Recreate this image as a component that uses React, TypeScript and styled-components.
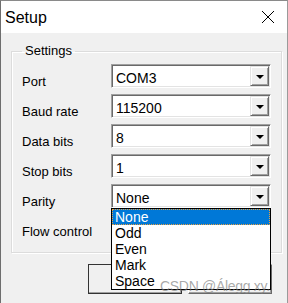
import React from "react";
import styled, { createGlobalStyle } from "styled-components";

const GlobalStyle = createGlobalStyle`
  html, body {
    margin: 0;
    padding: 0;
    background: #ffffff;
  }
  body {
    font-family: "Liberation Sans", Arial, sans-serif;
  }
`;

// the flow control value and the button captions sit under the open list
const rows = [
  { label: "Port", value: "COM3" },
  { label: "Baud rate", value: "115200" },
  { label: "Data bits", value: "8" },
  { label: "Stop bits", value: "1" },
  { label: "Parity", value: "None", open: true },
  { label: "Flow control", value: "" },
];

const parityOptions = ["None", "Odd", "Even", "Mark", "Space"];

const App = () => {
  return (
    <>
      <GlobalStyle />
      <Window>
        <TitleBar>
          <Title>Setup</Title>
          <CloseButton>
            <svg width="14" height="14" viewBox="0 0 14 14">
              <path d="M1 1 L13 13 M13 1 L1 13" stroke="#000" strokeWidth="1" fill="none" />
            </svg>
          </CloseButton>
        </TitleBar>
        <Body>
          <GroupBox>
            <Legend>Settings</Legend>
            <Grid>
              {rows.map(row => (
                <React.Fragment key={row.label}>
                  <Label>{row.label}</Label>
                  <ComboWrap>
                    <ComboBox>
                      <ComboValue>{row.value}</ComboValue>
                      <DropButton>
                        <Arrow />
                      </DropButton>
                    </ComboBox>
                    {row.open && (
                      <DropList>
                        {parityOptions.map(opt => (
                          <ListItem key={opt} selected={opt === row.value}>
                            {opt}
                          </ListItem>
                        ))}
                      </DropList>
                    )}
                  </ComboWrap>
                </React.Fragment>
              ))}
            </Grid>
          </GroupBox>
          <ButtonRow>
            <PushButton isDefault width={94} />
            <PushButton width={84} />
          </ButtonRow>
        </Body>
        <Watermark>CSDN @Álegg xy.</Watermark>
      </Window>
    </>
  );
};

export default App;

const Window = styled.div`
  position: relative;
  width: 288px;
  height: 303px;
  box-sizing: border-box;
  background-color: #f0f0f0;
  border-top: 1px solid #8a8a8a;
  border-left: 1px solid #6e6e6e;
  border-right: 1px solid #9a9a9a;
  overflow: hidden;
`;

const TitleBar = styled.div`
  height: 32px;
  background-color: #ffffff;
  display: flex;
  align-items: center;
  justify-content: space-between;
  padding: 0 12px 0 4px;
`;

const Title = styled.div`
  font-size: 16px;
  line-height: 16px;
  color: #000;
  padding-top: 1px;
`;

const CloseButton = styled.div`
  width: 14px;
  height: 14px;
  display: flex;
`;

const Body = styled.div`
  padding: 11px 0 0 10px;
`;

const GroupBox = styled.fieldset`
  box-sizing: border-box;
  width: 271px;
  margin: 0;
  padding: 6px 9px 14px 10px;
  border: 1px solid #dcdcdc;
  box-shadow: inset 1px 1px #ffffff, 1px 1px #ffffff;
  min-inline-size: 0;
`;

const Legend = styled.legend`
  font-size: 13px;
  line-height: 14px;
  padding: 0 3px;
  margin: 0;
  color: #000;
`;

const Grid = styled.div`
  display: grid;
  grid-template-columns: 89px 160px;
  grid-auto-rows: 24px;
  row-gap: 6px;
`;

const Label = styled.div`
  font-size: 13px;
  line-height: 13px;
  color: #000;
  display: flex;
  align-items: flex-end;
  white-space: nowrap;
`;

const ComboWrap = styled.div`
  position: relative;
`;

const ComboBox = styled.div`
  box-sizing: border-box;
  height: 24px;
  display: flex;
  padding: 1px;
  background-color: #ffffff;
  border: 1px solid;
  border-color: #a0a0a0 #ffffff #ffffff #a0a0a0;
  box-shadow: inset 1px 1px #696969, inset -1px -1px #e3e3e3;
`;

const ComboValue = styled.div`
  flex: 1;
  font-size: 14px;
  line-height: 20px;
  padding: 2px 0 0 3px;
  color: #000;
  overflow: hidden;
  white-space: nowrap;
`;

const DropButton = styled.div`
  box-sizing: border-box;
  width: 19px;
  height: 20px;
  background-color: #f0f0f0;
  border: 1px solid;
  border-color: #e3e3e3 #696969 #696969 #e3e3e3;
  box-shadow: inset 1px 1px #ffffff, inset -1px -1px #a0a0a0;
  display: flex;
  align-items: center;
  justify-content: center;
`;

const Arrow = styled.div`
  width: 0;
  height: 0;
  border-left: 4px solid transparent;
  border-right: 4px solid transparent;
  border-top: 4px solid #000;
  margin-top: 1px;
`;

const DropList = styled.div`
  position: absolute;
  top: 100%;
  left: 0;
  width: 160px;
  box-sizing: border-box;
  border: 1px solid #000;
  background-color: #ffffff;
  z-index: 2;
`;

const ListItem = styled.div<{ selected?: boolean }>`
  height: 16px;
  font-size: 14px;
  line-height: 16px;
  padding-left: 3px;
  color: ${props => (props.selected ? "#ffffff" : "#000000")};
  background-color: ${props => (props.selected ? "#0078d7" : "transparent")};
  outline: ${props => (props.selected ? "1px dotted #e8a040" : "none")};
  outline-offset: -1px;
`;

const ButtonRow = styled.div`
  display: flex;
  gap: 6px;
  margin-top: 11px;
  padding-left: 77px;
`;

const PushButton = styled.div<{ isDefault?: boolean; width: number }>`
  box-sizing: border-box;
  width: ${props => props.width}px;
  height: 30px;
  background-color: #f0f0f0;
  border: 1px solid;
  border-color: ${props =>
    props.isDefault ? "#333333" : "#ffffff #696969 #696969 #ffffff"};
  box-shadow: inset -1px -1px #a0a0a0;
`;

const Watermark = styled.div`
  position: absolute;
  left: 159px;
  top: 277px;
  font-size: 14px;
  line-height: 16px;
  letter-spacing: -0.3px;
  color: rgba(120, 120, 120, 0.65);
  z-index: 3;
  white-space: nowrap;
`;
